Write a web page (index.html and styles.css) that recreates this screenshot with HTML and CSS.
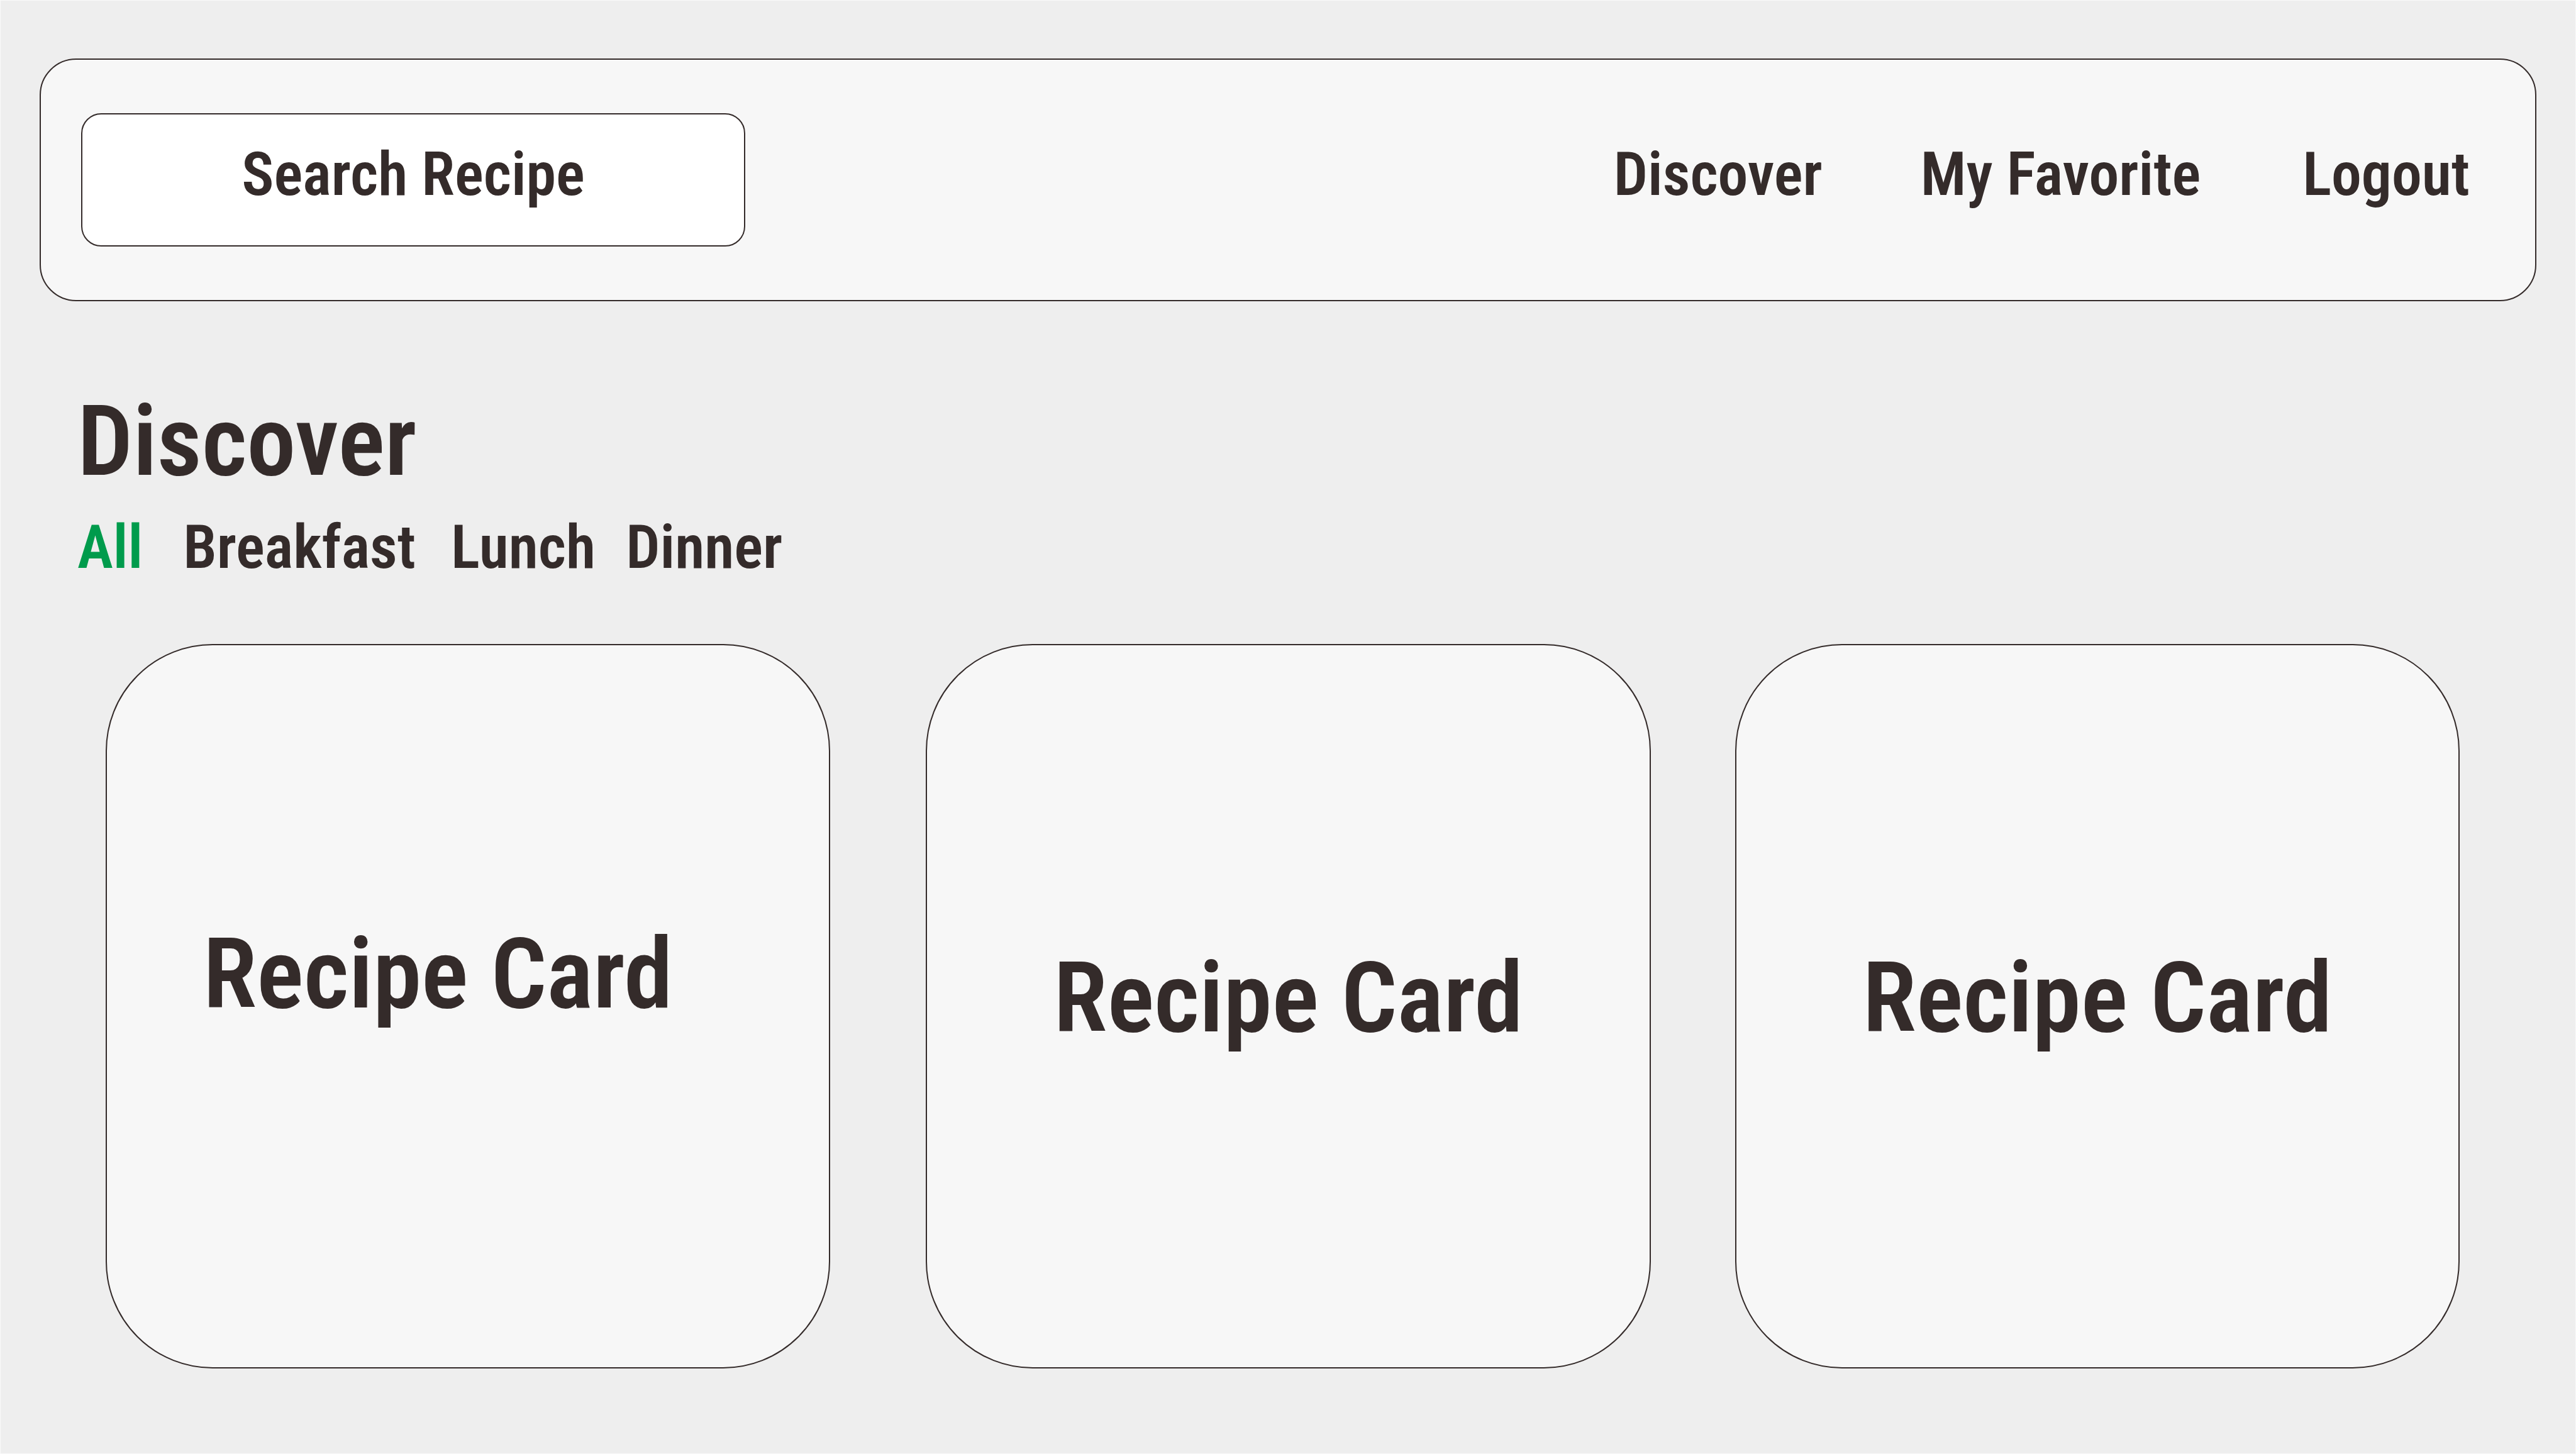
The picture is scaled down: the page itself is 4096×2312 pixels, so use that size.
FILE: index.html
```html
<!DOCTYPE html>
<html lang="en">
<head>
<meta charset="utf-8">
<title>Discover recipes</title>
<link rel="stylesheet" href="styles.css">
</head>
<body>
<header class="topbar">
  <input class="search" type="text" placeholder="Search Recipe" aria-label="Search Recipe">
  <nav class="nav">
    <a class="link" href="#discover">Discover</a>
    <a class="link link-favorite" href="#favorite">My Favorite</a>
    <a class="link" href="#logout">Logout</a>
  </nav>
</header>
<main>
  <section class="intro" id="discover">
    <h1 class="title">Discover</h1>
    <div class="filters">
      <button class="filter filter-all" type="button" aria-pressed="true">All</button>
      <button class="filter filter-breakfast" type="button">Breakfast</button>
      <button class="filter" type="button">Lunch</button>
      <button class="filter" type="button">Dinner</button>
    </div>
  </section>
  <section class="cards">
    <article class="card card-lead"><h2 class="card-title">Recipe Card</h2></article>
    <article class="card"><h2 class="card-title">Recipe Card</h2></article>
    <article class="card"><h2 class="card-title">Recipe Card</h2></article>
  </section>
</main>
</body>
</html>
```
FILE: styles.css
```css
:root {
  --ink: #342b2a;
  --page: #eeeeee;
  --panel: #f7f7f7;
  --accent: #009b4c;
  --text: 96px;
  --display: 156px;
}

* {
  box-sizing: border-box;
}

body {
  min-height: 100vh;
  margin: 0;
  padding: 92px 0 0;
  border: 1px solid #fafafa;
  background: var(--page);
  color: var(--ink);
  font: 600 var(--text)/112px "Roboto Condensed", Lato, Roboto, sans-serif;
}

.topbar {
  display: flex;
  align-items: center;
  justify-content: space-between;
  margin: 0 62px;
  padding: 85px 104px 85px 64px;
  border: 2px solid var(--ink);
  border-radius: 58px;
  background: var(--panel);
}

.search {
  flex: 0 1 1056px;
  min-width: 0;
  height: 212px;
  margin: 0;
  padding: 0 0 18px;
  border: 2px solid var(--ink);
  border-radius: 32px;
  background: #fff;
  color: inherit;
  font: inherit;
  text-align: center;
  appearance: none;
}

.search::placeholder {
  color: inherit;
  opacity: 1;
}

.nav {
  display: flex;
  gap: 156px;
  padding-bottom: 18px;
}

.link {
  color: inherit;
  text-decoration: none;
}

.link-favorite {
  margin-right: 6px;
}

.intro {
  padding: 133px 122px 0;
}

.title,
.card-title {
  margin: 0;
  font-size: var(--display);
  font-weight: inherit;
  line-height: 180px;
}

.filters {
  display: flex;
  gap: 48px;
  margin-top: 22px;
}

.filter {
  padding: 0;
  border: 0;
  background: none;
  color: inherit;
  font: inherit;
}

.filter-all {
  margin-right: 16px;
  color: var(--accent);
}

.filter-breakfast {
  margin-right: 8px;
}

.cards {
  display: flex;
  gap: 134px;
  padding: 98px 184px 0 167px;
}

.card {
  display: flex;
  flex: none;
  align-items: center;
  justify-content: center;
  width: calc((100% - 286px) / 3);
  aspect-ratio: 1;
  padding-bottom: 26px;
  border: 2px solid var(--ink);
  border-radius: 170px;
  background: var(--panel);
}

.card-lead {
  margin-right: 18px;
  padding: 0 96px 102px 0;
}
```
